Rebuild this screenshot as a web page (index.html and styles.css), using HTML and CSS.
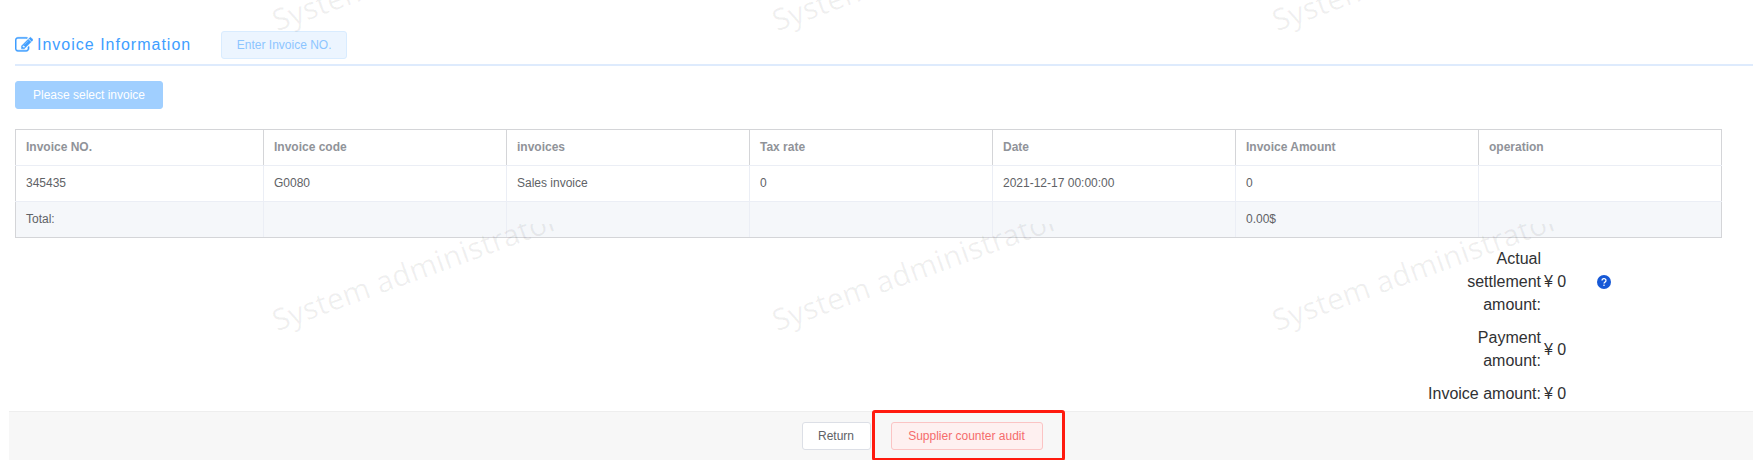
FILE: index.html
```html
<!DOCTYPE html>
<html lang="en">
<head>
<meta charset="utf-8">
<title>Invoice Information</title>
<link rel="stylesheet" href="styles.css">
</head>
<body>
<main class="page">
  <header class="section-head">
    <h1 class="section-title">
      <svg class="edit-icon" viewBox="0 0 1792 1792" aria-hidden="true"><path d="M888 1184l116-116-152-152-116 116v56h96v96h56zm440-720q-16-16-33 1l-350 350q-17 17-1 33t33-1l350-350q17-17 1-33zm80 594v190q0 119-84.500 203.500t-203.500 84.500h-832q-119 0-203.500-84.500t-84.500-203.500v-832q0-119 84.500-203.500t203.500-84.500h832q63 0 117 25 15 7 18 23 3 17-9 29l-49 49q-14 14-32 8-23-6-45-6h-832q-66 0-113 47t-47 113v832q0 66 47 113t113 47h832q66 0 113-47t47-113v-126q0-13 9-22l64-64q15-15 35-7t20 29zm-96-738l288 288-672 672h-288v-288zm444 132l-92 92-288-288 92-92q28-28 68-28t68 28l152 152q28 28 28 68t-28 68z"/></svg>
      <span>Invoice Information</span>
    </h1>
    <button type="button" class="btn btn-plain-primary">Enter Invoice NO.</button>
  </header>

  <div class="toolbar">
    <button type="button" class="btn btn-primary">Please select invoice</button>
  </div>

  <table class="invoices">
    <thead>
      <tr><th>Invoice NO.</th><th>Invoice code</th><th>invoices</th><th>Tax rate</th><th>Date</th><th>Invoice Amount</th><th>operation</th></tr>
    </thead>
    <tbody>
      <tr><td>345435</td><td>G0080</td><td>Sales invoice</td><td>0</td><td>2021-12-17 00:00:00</td><td>0</td><td></td></tr>
    </tbody>
    <tfoot>
      <tr><td>Total:</td><td></td><td></td><td></td><td></td><td>0.00$</td><td></td></tr>
    </tfoot>
  </table>

  <dl class="totals">
    <div class="total-row">
      <dt>Actual settlement amount:</dt>
      <dd>¥ 0</dd>
      <dd class="help">
        <svg class="help-icon" viewBox="0 0 14 14" role="img" aria-label="Help"><circle cx="7" cy="7" r="7" fill="#1658d6"/><path d="M5 5.500a2 1.900 0 1 1 3 1.600C7.300 7.500 7 7.800 7 8.500" fill="none" stroke="#fff" stroke-width="1.300"/><circle cx="7" cy="10.300" r=".8" fill="#fff"/></svg>
      </dd>
    </div>
    <div class="total-row"><dt>Payment amount:</dt><dd>¥ 0</dd></div>
    <div class="total-row"><dt>Invoice amount:</dt><dd>¥ 0</dd></div>
  </dl>
</main>

<footer class="actions">
  <button type="button" class="btn btn-default">Return</button>
  <div class="marked">
    <button type="button" class="btn btn-danger">Supplier counter audit</button>
  </div>
</footer>

<div class="watermark" aria-hidden="true">
  <div class="tile"><span>System administrator</span></div>
  <div class="tile"><span>System administrator</span></div>
  <div class="tile"><span>System administrator</span></div>
  <div class="tile"><span>System administrator</span></div>
  <div class="tile"><span>System administrator</span></div>
  <div class="tile"><span>System administrator</span></div>
</div>
</body>
</html>
```

FILE: styles.css
```css
* {
  box-sizing: border-box;
}

body {
  position: relative;
  margin: 0;
  padding-left: 9px;
  background: #fff;
  color: #303133;
  font-family: "Liberation Sans", Arial, sans-serif;
  font-size: 12px;
}

.page {
  padding: 24px 0 6px 6px;
}

.section-head {
  display: flex;
  align-items: center;
  gap: 30px;
  padding: 7px 0 5px;
  border-bottom: 2px solid #deebfd;
}

.section-title {
  display: flex;
  align-items: center;
  gap: 4px;
  margin: 0;
  color: #409eff;
  font-size: 16px;
  font-weight: 400;
  letter-spacing: 1px;
}

.edit-icon {
  width: 18px;
  height: 18px;
  fill: currentColor;
  stroke: currentColor;
  stroke-width: 40;
}

.btn {
  height: 28px;
  padding: 0 14px;
  border: 1px solid;
  border-radius: 3px;
  font: 12px "Liberation Sans", Arial, sans-serif;
  cursor: pointer;
}

.btn-plain-primary {
  min-width: 126px;
  border-color: #d9ecff;
  background: #ecf5ff;
  color: #8cc5ff;
}

.btn-primary {
  min-width: 148px;
  border-color: #a0cfff;
  background: #a0cfff;
  color: #fff;
}

.btn-default {
  min-width: 69px;
  border-color: #dcdfe6;
  background: #fff;
  color: #606266;
}

.btn-danger {
  min-width: 152px;
  border-color: #fbc4c4;
  background: #fef0f0;
  color: #f56c6c;
}

.toolbar {
  padding: 15px 0 20px;
}

.invoices {
  width: calc(100% - 31px);
  border: 1px solid #d4d5d8;
  border-collapse: collapse;
  table-layout: fixed;
  color: #606266;
}

.invoices th,
.invoices td {
  height: 36px;
  padding: 0 10px 2px;
  border: 1px solid #ebeef5;
  text-align: left;
}

.invoices th {
  border-color: #d4d5d8;
  border-bottom-color: #ebeef5;
  color: #909399;
  font-weight: 700;
}

.invoices tr > :first-child {
  width: 248px;
  border-left-color: #d4d5d8;
}

.invoices tr > :last-child {
  border-right-color: #d4d5d8;
}

.invoices tbody td {
  border-top-color: #ebeef5;
}

.invoices tfoot td {
  border-bottom-color: #d4d5d8;
  background: #f5f7fa;
}

.totals {
  display: flex;
  flex-direction: column;
  gap: 10px;
  width: 326px;
  margin: 9px 0 0 auto;
  font-size: 16px;
  line-height: 23px;
}

.total-row {
  display: grid;
  grid-template-columns: 114px 50px auto;
  align-items: center;
  gap: 3px;
}

.total-row dt {
  text-align: right;
}

.total-row dd {
  margin: 0;
}

.total-row .help {
  display: flex;
}

.help-icon {
  width: 14px;
  height: 14px;
}

.actions {
  display: flex;
  justify-content: center;
  align-items: center;
  gap: 20px;
  height: 49px;
  padding-left: 82px;
  border-top: 1px solid #eee;
  background: #f7f7f7;
}

.marked {
  position: relative;
}

.marked::after {
  content: "";
  position: absolute;
  inset: -12px -22px -11px -19px;
  border: 3px solid #ff1a0e;
  border-radius: 3px;
  pointer-events: none;
}

.watermark {
  position: absolute;
  inset: 0;
  display: grid;
  grid-template-columns: repeat(3, 500px);
  grid-template-rows: 224px 300px;
  padding-left: 250px;
  overflow: hidden;
  pointer-events: none;
}

.tile {
  display: flex;
  align-items: flex-end;
  padding: 0 0 184px 30px;
  overflow: hidden;
  color: rgba(0, 0, 0, 0.06);
  font: 400 30px/40px "Noto Sans", sans-serif;
  white-space: nowrap;
}

.tile span {
  transform: rotate(-20deg);
  transform-origin: 0 100%;
}
```
